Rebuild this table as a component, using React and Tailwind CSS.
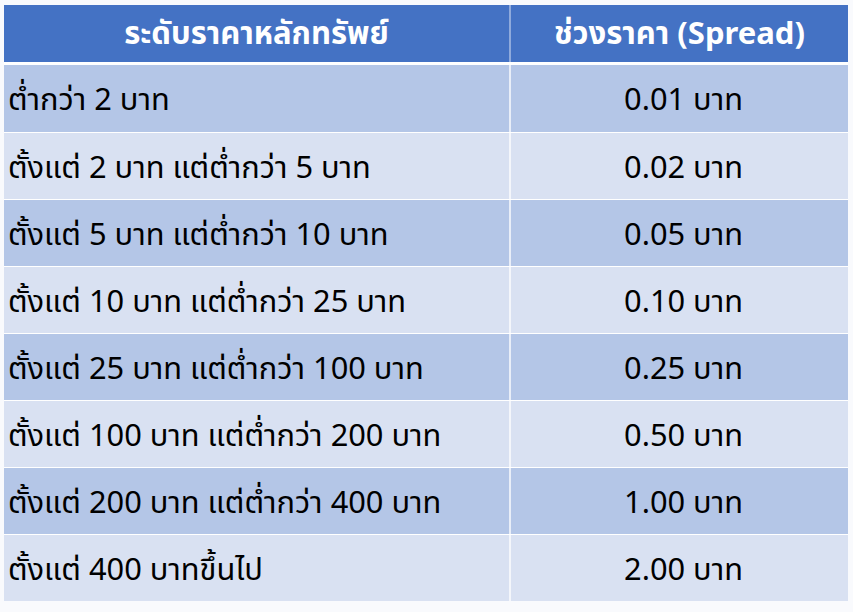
const rows = [
  ['ต่ำกว่า 2 บาท', '0.01 บาท'],
  ['ตั้งแต่ 2 บาท แต่ต่ำกว่า 5 บาท', '0.02 บาท'],
  ['ตั้งแต่ 5 บาท แต่ต่ำกว่า 10 บาท', '0.05 บาท'],
  ['ตั้งแต่ 10 บาท แต่ต่ำกว่า 25 บาท', '0.10 บาท'],
  ['ตั้งแต่ 25 บาท แต่ต่ำกว่า 100 บาท', '0.25 บาท'],
  ['ตั้งแต่ 100 บาท แต่ต่ำกว่า 200 บาท', '0.50 บาท'],
  ['ตั้งแต่ 200 บาท แต่ต่ำกว่า 400 บาท', '1.00 บาท'],
  ['ตั้งแต่ 400 บาทขึ้นไป', '2.00 บาท'],
];

export default function App() {
  return (
    <div className="w-[853px] h-[612px] bg-[#f9fafd] pt-[5px] pl-[4px]" style={{ fontFamily: '"Noto Sans", "Noto Sans Thai", "DejaVu Sans", sans-serif' }}>
      <div className="w-[844px] flex flex-col">
        {/* header */}
        <div className="flex h-[57px] bg-[#4472c4] text-white font-bold text-[31px]">
          <div className="w-[505px] flex items-center justify-center pb-[2px]">ระดับราคาหลักทรัพย์</div>
          <div className="w-[2px] bg-[#8faadc]" />
          <div className="flex-1 flex items-center justify-center pb-[2px]">ช่วงราคา (Spread)</div>
        </div>
        <div className="h-[3px] bg-white" />
        {rows.map(([range, spread], i) => (
          <div key={i} className={`flex h-[67px] text-[30.8px] text-black ${i % 2 === 0 ? 'bg-[#b4c6e7]' : 'bg-[#d9e1f2]'} ${i > 0 ? 'border-t border-white' : ''}`}>
            <div className="w-[505px] flex items-center pl-[4px]">{range}</div>
            <div className="w-[2px] bg-white/70" />
            <div className="flex-1 flex items-center justify-center pl-[8px]">{spread}</div>
          </div>
        ))}
      </div>
    </div>
  );
}
